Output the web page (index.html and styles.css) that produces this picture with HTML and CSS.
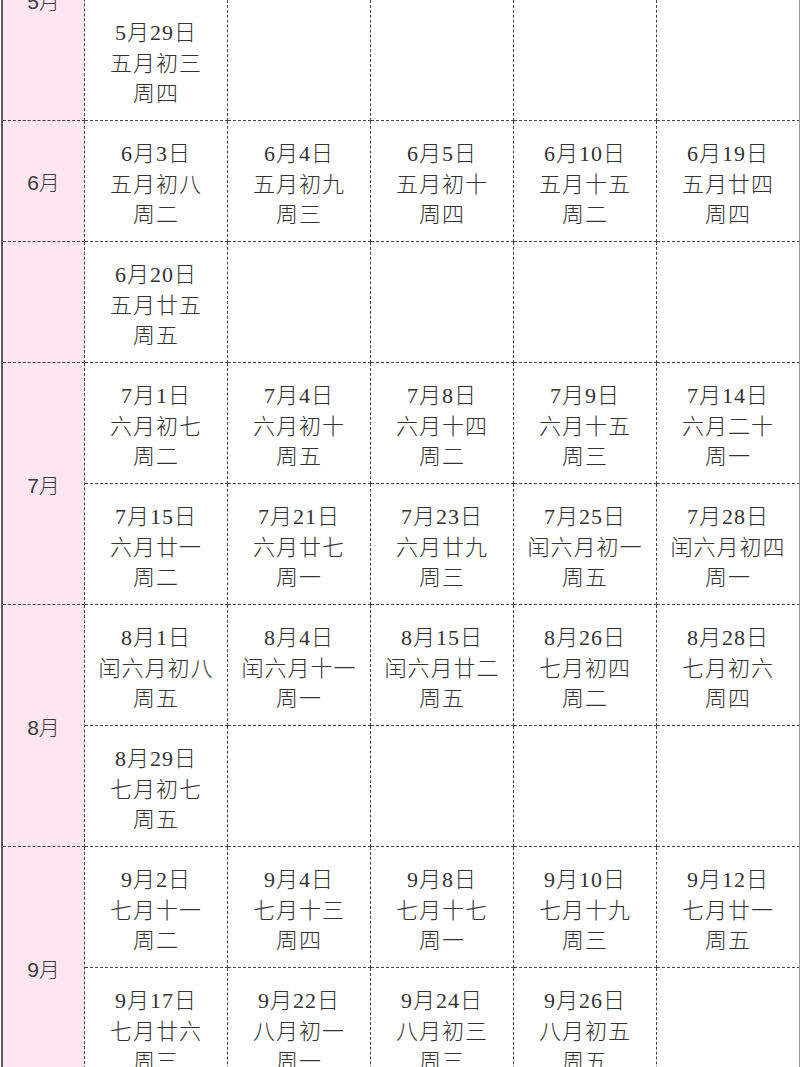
FILE: index.html
```html
<!DOCTYPE html>
<html lang="zh-CN">
<head>
<meta charset="utf-8">
<title>日历</title>
<link rel="stylesheet" href="styles.css">
</head>
<body>
<div class="sheet">
  <div class="month span2">5月</div>
  <div class="cell"></div><div class="cell"></div><div class="cell"></div><div class="cell"></div><div class="cell"></div>
  <div class="cell"><span>5月29日</span><span>五月初三</span><span>周四</span></div>
  <div class="cell"></div><div class="cell"></div><div class="cell"></div><div class="cell"></div>

  <div class="month">6月</div>
  <div class="cell"><span>6月3日</span><span>五月初八</span><span>周二</span></div>
  <div class="cell"><span>6月4日</span><span>五月初九</span><span>周三</span></div>
  <div class="cell"><span>6月5日</span><span>五月初十</span><span>周四</span></div>
  <div class="cell"><span>6月10日</span><span>五月十五</span><span>周二</span></div>
  <div class="cell"><span>6月19日</span><span>五月廿四</span><span>周四</span></div>

  <div class="month"></div>
  <div class="cell"><span>6月20日</span><span>五月廿五</span><span>周五</span></div>
  <div class="cell"></div><div class="cell"></div><div class="cell"></div><div class="cell"></div>

  <div class="month span2">7月</div>
  <div class="cell"><span>7月1日</span><span>六月初七</span><span>周二</span></div>
  <div class="cell"><span>7月4日</span><span>六月初十</span><span>周五</span></div>
  <div class="cell"><span>7月8日</span><span>六月十四</span><span>周二</span></div>
  <div class="cell"><span>7月9日</span><span>六月十五</span><span>周三</span></div>
  <div class="cell"><span>7月14日</span><span>六月二十</span><span>周一</span></div>
  <div class="cell"><span>7月15日</span><span>六月廿一</span><span>周二</span></div>
  <div class="cell"><span>7月21日</span><span>六月廿七</span><span>周一</span></div>
  <div class="cell"><span>7月23日</span><span>六月廿九</span><span>周三</span></div>
  <div class="cell"><span>7月25日</span><span>闰六月初一</span><span>周五</span></div>
  <div class="cell"><span>7月28日</span><span>闰六月初四</span><span>周一</span></div>

  <div class="month span2">8月</div>
  <div class="cell"><span>8月1日</span><span>闰六月初八</span><span>周五</span></div>
  <div class="cell"><span>8月4日</span><span>闰六月十一</span><span>周一</span></div>
  <div class="cell"><span>8月15日</span><span>闰六月廿二</span><span>周五</span></div>
  <div class="cell"><span>8月26日</span><span>七月初四</span><span>周二</span></div>
  <div class="cell"><span>8月28日</span><span>七月初六</span><span>周四</span></div>
  <div class="cell"><span>8月29日</span><span>七月初七</span><span>周五</span></div>
  <div class="cell"></div><div class="cell"></div><div class="cell"></div><div class="cell"></div>

  <div class="month span2">9月</div>
  <div class="cell"><span>9月2日</span><span>七月十一</span><span>周二</span></div>
  <div class="cell"><span>9月4日</span><span>七月十三</span><span>周四</span></div>
  <div class="cell"><span>9月8日</span><span>七月十七</span><span>周一</span></div>
  <div class="cell"><span>9月10日</span><span>七月十九</span><span>周三</span></div>
  <div class="cell"><span>9月12日</span><span>七月廿一</span><span>周五</span></div>
  <div class="cell"><span>9月17日</span><span>七月廿六</span><span>周三</span></div>
  <div class="cell"><span>9月22日</span><span>八月初一</span><span>周一</span></div>
  <div class="cell"><span>9月24日</span><span>八月初三</span><span>周三</span></div>
  <div class="cell"><span>9月26日</span><span>八月初五</span><span>周五</span></div>
  <div class="cell"></div>
</div>
</body>
</html>
```

FILE: styles.css
```css
html, body {
  margin: 0;
  padding: 0;
  overflow: hidden;
  background: #ffffff;
}

.sheet {
  display: grid;
  grid-template-columns: 82px repeat(5, 143px);
  grid-auto-rows: 121px;
  width: 796px;
  margin: -121px 0 0 1px;
  border-left: 2px solid #5e5a5e;
  border-right: 1px solid #9a9a9a;
  overflow: hidden;
  font-family: "Liberation Serif", "Noto Sans CJK SC", serif;
  color: #333333;
}

.cell,
.month {
  box-sizing: border-box;
  border-right: 1px dashed #444444;
  border-bottom: 1px dashed #444444;
  display: flex;
  flex-direction: column;
  align-items: center;
  justify-content: center;
}

.cell {
  font-size: 22px;
  font-weight: 300;
  line-height: 30.5px;
  letter-spacing: 1px;
  padding-top: 8px;
}

.cell span {
  white-space: nowrap;
}

.month {
  background: #fde6f1;
  font-size: 21px;
  font-family: "Liberation Sans", "Noto Sans CJK SC", sans-serif;
  font-weight: 300;
  color: #3c3c3c;
}

.span2 {
  grid-row: span 2;
}
```
